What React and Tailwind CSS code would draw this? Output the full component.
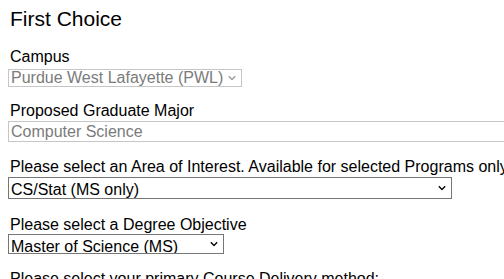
import { useState } from "react";

// Chevron drawn in the select, same as the browser's own
const Chevron = ({ color = "#000" }) => (
    <svg className="pointer-events-none absolute right-[6px] top-1/2 -translate-y-1/2" width="8" height="5" viewBox="0 0 8 5">
        <path d="M0.8 0.8 L4 4 L7.2 0.8" fill="none" stroke={color} strokeWidth="1.3" />
    </svg>
);

const Field = ({ label, className = "", children }) => (
    <div className={className}>
        <label className="block leading-[18px] pl-[2px]">{label}</label>
        {children}
    </div>
);

const App = () => {
    const [area, setArea] = useState("csstat");
    const [degree, setDegree] = useState("ms");

    return (
        <div className="pl-2 pt-[7px] h-[279px] overflow-hidden bg-white text-black text-[16px] font-['Liberation_Sans',Arial,sans-serif]">
            <h2 className="text-[21px] leading-[24px] pl-[2px]">First Choice</h2>

            <Field label="Campus" className="mt-[17px]">
                <div className="relative mt-[3px] w-[234px]">
                    <select disabled className="appearance-none block w-full h-[18px] leading-[16px] pl-[2px] border border-[#c6c6c6] text-[#7b7b7b] bg-white">
                        <option>Purdue West Lafayette (PWL)</option>
                    </select>
                    <Chevron color="#9a9a9a" />
                </div>
            </Field>

            <Field label="Proposed Graduate Major" className="mt-[15px]">
                <input
                    disabled
                    value="Computer Science"
                    className="block mt-px w-[520px] h-[21px] pl-[2px] border border-[#c6c6c6] text-[#7b7b7b] bg-white"
                />
            </Field>

            <Field label="Please select an Area of Interest. Available for selected Programs only" className="mt-4 whitespace-nowrap">
                <div className="relative mt-px w-[444px]">
                    <select
                        value={area}
                        onChange={(e) => setArea(e.target.value)}
                        className="appearance-none block w-full h-[22px] pl-[2px] border border-[#767676] bg-white"
                    >
                        <option value="csstat">CS/Stat (MS only)</option>
                    </select>
                    <Chevron />
                </div>
            </Field>

            <Field label="Please select a Degree Objective" className="mt-[17px]">
                <div className="relative w-[216px]">
                    <select
                        value={degree}
                        onChange={(e) => setDegree(e.target.value)}
                        className="appearance-none block w-full h-[20px] pl-[2px] border border-[#767676] bg-white"
                    >
                        <option value="ms">Master of Science (MS)</option>
                    </select>
                    <Chevron />
                </div>
            </Field>

            <Field label="Please select your primary Course Delivery method:" className="mt-4" />
        </div>
    );
};

export default App;
